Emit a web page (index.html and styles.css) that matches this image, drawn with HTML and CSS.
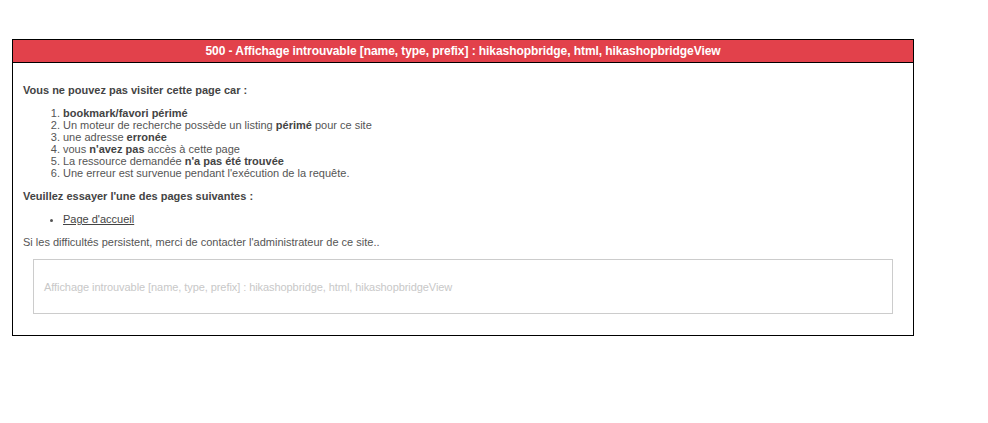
FILE: index.html
```html
<!DOCTYPE html>
<html lang="fr">
<head>
  <meta charset="UTF-8" />
  <title>500 - Affichage introuvable</title>
  <link rel="stylesheet" href="styles.css">
</head>
<body>
  <div class="error-box">
    <h1 class="error-title">500 - Affichage introuvable [name, type, prefix] : hikashopbridge, html, hikashopbridgeView</h1>
    <div class="error-body">
      <p><strong>Vous ne pouvez pas visiter cette page car :</strong></p>
      <ol>
        <li><strong>bookmark/favori périmé</strong></li>
        <li>Un moteur de recherche possède un listing <strong>périmé</strong> pour ce site</li>
        <li>une adresse <strong>erronée</strong></li>
        <li>vous <strong>n'avez pas</strong> accès à cette page</li>
        <li>La ressource demandée <strong>n'a pas été trouvée</strong></li>
        <li>Une erreur est survenue pendant l'exécution de la requête.</li>
      </ol>
      <p><strong>Veuillez essayer l'une des pages suivantes :</strong></p>
      <ul>
        <li><a href="#">Page d'accueil</a></li>
      </ul>
      <p>Si les difficultés persistent, merci de contacter l'administrateur de ce site..</p>
      <div class="error-detail">
        <p>Affichage introuvable [name, type, prefix] : hikashopbridge, html, hikashopbridgeView</p>
      </div>
    </div>
  </div>
</body>
</html>
```

FILE: styles.css
```css
body {
  margin: 0;
  padding: 39px 12px;
  font-family: "Liberation Sans", Arial, sans-serif;
  font-size: 11px;
  line-height: 12px;
  color: #555;
  background: #fff;
}
.error-box {
  width: 900px;
  border: 1px solid #000;
}
.error-title {
  margin: 0;
  height: 22px;
  line-height: 22px;
  background: #e2414b;
  color: #fff;
  font-size: 12px;
  font-weight: bold;
  letter-spacing: -0.07px;
  text-align: center;
  border-bottom: 1px solid #000;
}
.error-body {
  padding: 10px;
}
.error-body p,
.error-body ol,
.error-body ul {
  margin: 11px 0;
}
.error-body ol,
.error-body ul {
  padding-left: 40px;
}
.error-body strong {
  color: #444;
}
.error-body a {
  color: #444;
  text-decoration: underline;
}
.error-detail {
  margin: 11px 10px;
  padding: 0 10px;
  border: 1px solid #ccc;
  color: #c8c8c8;
  letter-spacing: -0.07px;
}
.error-detail p {
  margin: 0;
  padding: 21px 0 20px;
}
```
